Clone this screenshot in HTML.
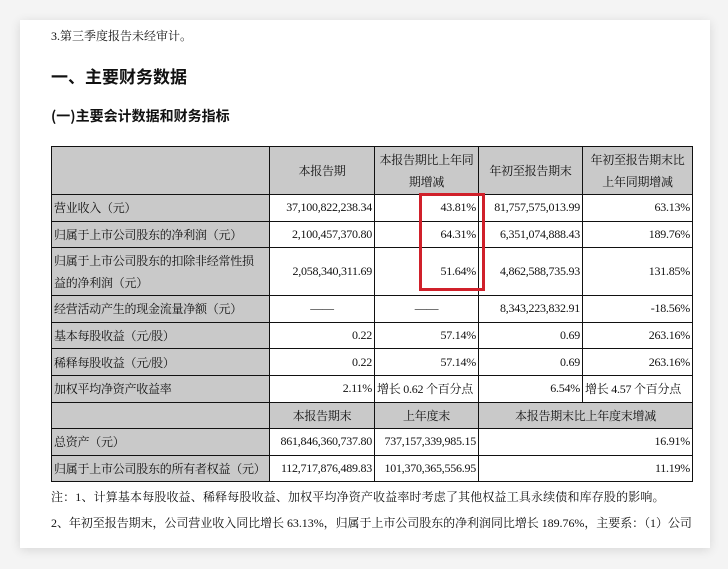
<!DOCTYPE html>
<html><head><meta charset="utf-8"><style>
body{margin:0;width:728px;height:569px;background:#f4f4f4;overflow:hidden;font-family:"Liberation Serif","Noto Serif CJK SC",serif;color:#111;}
.card{position:absolute;left:20px;top:20px;width:690px;height:528px;background:#fff;box-shadow:0 2px 10px rgba(0,0,0,.12);}
.t{position:absolute;white-space:nowrap;}
table{position:absolute;left:51px;top:146px;width:641px;table-layout:fixed;border-collapse:collapse;font-size:12px;letter-spacing:-0.25px;}
td{border:1.3px solid #111;padding:0 2px;white-space:nowrap;overflow:hidden;}
tr{height:26.6px}
td.g{background:#c9c9c9;}
.r{text-align:right}.c{text-align:center}
.red{position:absolute;left:419px;top:193px;width:60px;height:92px;border:3px solid #d0202a;}
</style></head><body>
<div class="card"></div>
<div class="t" style="left:51px;top:27px;font-size:12px">3.第三季度报告未经审计。</div>
<div class="t" style="left:51px;top:63px;font-size:17px;font-weight:bold;font-family:'Noto Sans CJK SC',sans-serif">一、主要财务数据</div>
<div class="t" style="left:51px;top:106px;font-size:14px;font-weight:bold;font-family:'Noto Sans CJK SC',sans-serif">(一)主要会计数据和财务指标</div>
<table>
<colgroup><col style="width:218px"><col style="width:105px"><col style="width:104px"><col style="width:104px"><col style="width:110px"></colgroup>
<tr style="height:48px"><td class="g"></td><td class="g c">本报告期</td><td class="g c" style="line-height:22px">本报告期比上年同<br>期增减</td><td class="g c">年初至报告期末</td><td class="g c" style="line-height:22px">年初至报告期末比<br>上年同期增减</td></tr>
<tr><td class="g">营业收入（元）</td><td class="r">37,100,822,238.34</td><td class="r">43.81%</td><td class="r">81,757,575,013.99</td><td class="r">63.13%</td></tr>
<tr><td class="g">归属于上市公司股东的净利润（元）</td><td class="r">2,100,457,370.80</td><td class="r">64.31%</td><td class="r">6,351,074,888.43</td><td class="r">189.76%</td></tr>
<tr style="height:48px"><td class="g" style="line-height:22px">归属于上市公司股东的扣除非经常性损<br>益的净利润（元）</td><td class="r">2,058,340,311.69</td><td class="r">51.64%</td><td class="r">4,862,588,735.93</td><td class="r">131.85%</td></tr>
<tr><td class="g">经营活动产生的现金流量净额（元）</td><td class="c">——</td><td class="c">——</td><td class="r">8,343,223,832.91</td><td class="r">-18.56%</td></tr>
<tr><td class="g">基本每股收益（元/股）</td><td class="r">0.22</td><td class="r">57.14%</td><td class="r">0.69</td><td class="r">263.16%</td></tr>
<tr><td class="g">稀释每股收益（元/股）</td><td class="r">0.22</td><td class="r">57.14%</td><td class="r">0.69</td><td class="r">263.16%</td></tr>
<tr><td class="g">加权平均净资产收益率</td><td class="r">2.11%</td><td>增长 0.62 个百分点</td><td class="r">6.54%</td><td>增长 4.57 个百分点</td></tr>
<tr><td class="g"></td><td class="g c">本报告期末</td><td class="g c">上年度末</td><td class="g c" colspan="2">本报告期末比上年度末增减</td></tr>
<tr><td class="g">总资产（元）</td><td class="r">861,846,360,737.80</td><td class="r">737,157,339,985.15</td><td class="r" colspan="2">16.91%</td></tr>
<tr><td class="g">归属于上市公司股东的所有者权益（元）</td><td class="r">112,717,876,489.83</td><td class="r">101,370,365,556.95</td><td class="r" colspan="2">11.19%</td></tr>
</table>
<div class="red"></div>
<div class="t" style="left:51px;top:488px;font-size:12px;letter-spacing:0.15px">注：1、计算基本每股收益、稀释每股收益、加权平均净资产收益率时考虑了其他权益工具永续债和库存股的影响。</div>
<div class="t" style="left:51px;top:514px;font-size:12px;letter-spacing:-0.05px">2、年初至报告期末，公司营业收入同比增长 63.13%，归属于上市公司股东的净利润同比增长 189.76%，主要系：（1）公司</div>
</body></html>
